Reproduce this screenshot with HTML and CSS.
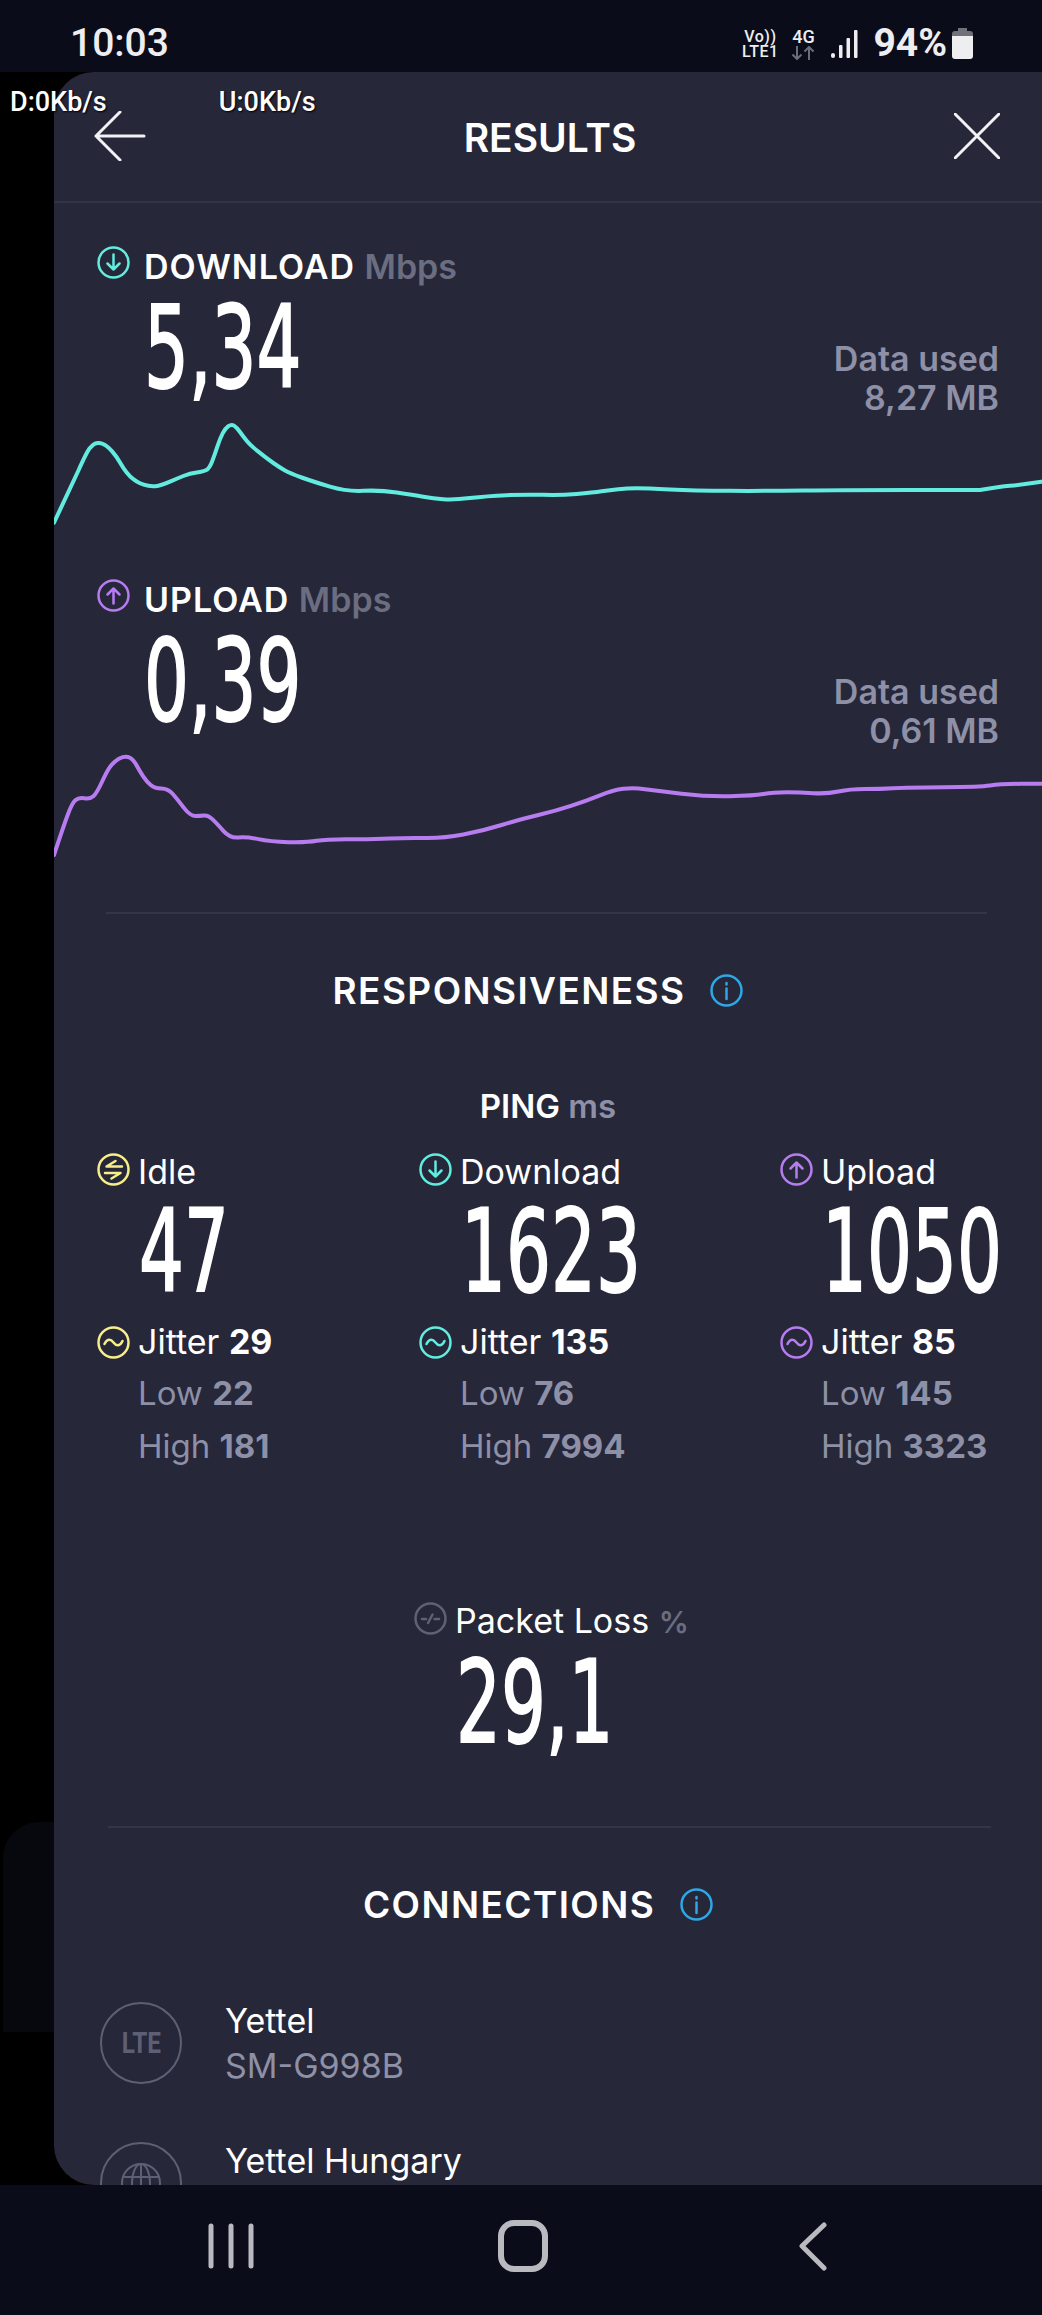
FILE: index.html
```html
<!DOCTYPE html>
<html>
<head>
  <meta charset="UTF-8">
  <title>Results</title>
  <link rel="stylesheet" href="styles.css">
</head>
<body>
  <!-- shared icons -->
  <svg class="icon-defs" width="0" height="0">
    <symbol id="i-down" viewBox="0 0 33 33"><circle cx="16.5" cy="16.5" r="15"/><path d="M16.5 8.5V23.5M10.5 17.5L16.5 23.5L22.5 17.5"/></symbol>
    <symbol id="i-up" viewBox="0 0 33 33"><circle cx="16.5" cy="16.5" r="15"/><path d="M16.5 24.5V9.5M10.5 15.5L16.5 9.5L22.5 15.5"/></symbol>
    <symbol id="i-idle" viewBox="0 0 33 33"><circle cx="16.5" cy="16.5" r="15"/><path d="M25 13.5H9.5L18.5 8M8 20H23.5L14.5 25.5"/></symbol>
    <symbol id="i-jitter" viewBox="0 0 33 33"><circle cx="16.5" cy="16.5" r="15"/><path d="M7.5 18C10 12.5 13.5 12.5 16.5 16.5S23 20.5 25.5 15"/></symbol>
    <symbol id="i-info" viewBox="0 0 33 33"><circle cx="16.5" cy="16.5" r="15"/><path d="M16.5 14.5V25M16.5 9V10.5"/></symbol>
    <symbol id="i-loss" viewBox="0 0 33 33"><circle cx="16.5" cy="16.5" r="15"/><path d="M8 17H12M14 21L18.5 12.5M20.5 17H25"/></symbol>
  </svg>

  <div class="status-bar">
    <span class="clock">10:03</span>
    <div class="status-icons">
      <div class="volte"><span>Vo))</span><span>LTE1</span></div>
      <div class="net">
        <span>4G</span>
        <svg width="24" height="14" viewBox="0 0 24 14"><path d="M6 0V13M1.5 8.5L6 13L10.500 8.500M18 14V1M13.500 5.500L18 1L22.500 5.500"/></svg>
      </div>
      <svg class="signal" width="27" height="29" viewBox="0 0 27 29"><rect x="0" y="23" width="4" height="5" rx="2"/><rect x="8" y="15" width="3.500" height="13" rx="1"/><rect x="15.500" y="8" width="3.500" height="20" rx="1"/><rect x="23" y="0" width="3.500" height="28" rx="1"/></svg>
      <span class="battery-pct">94%</span>
      <svg class="battery" width="21" height="31" viewBox="0 0 21 31"><path class="battery-cap" d="M6 0H15V3H18A3 3 0 0 1 21 6V8H0V6A3 3 0 0 1 3 3H6Z"/><path d="M0 8H21V28A3 3 0 0 1 18 31H3A3 3 0 0 1 0 28Z"/></svg>
    </div>
  </div>

  <div class="main">
    <div class="backdrop"><div class="backdrop-card"></div></div>

    <div class="panel">
      <div class="top-bar">
        <svg width="52" height="50" viewBox="0 0 52 50"><path d="M50 25H2M26 1L2 25L26 49"/></svg>
        <span class="top-title">RESULTS</span>
        <svg width="46" height="46" viewBox="0 0 46 46"><path d="M1 1L45 45M45 1L1 45"/></svg>
      </div>

      <!-- download -->
      <div class="speed">
        <div class="speed-head">
          <div>
            <div class="metric-title">
              <svg class="icon cyan"><use href="#i-down"/></svg>
              <span class="caps">DOWNLOAD <em>Mbps</em></span>
            </div>
            <div class="big speed-value">5,34</div>
          </div>
          <div class="data-used">Data used<br>8,27 MB</div>
        </div>
        <svg class="chart chart-down" width="988" height="120" viewBox="81 570 1482 360" preserveAspectRatio="none">
          <path vector-effect="non-scaling-stroke" d="M81 908L118 750Q130 697 134 686.500Q138 676 141.500 672Q145 668 149 669Q153 670 157.500 675Q162 680 168.500 695Q175 710 180 727.500Q185 745 190 757.500Q195 770 200 777.500Q205 785 210 790Q215 795 222.500 797.500Q230 800 237.500 797Q245 794 255 785Q265 776 275 768Q285 760 295 757.500Q305 755 309.500 750Q314 745 318 725Q322 705 326 680Q330 655 334 640Q338 625 342.500 618.500Q347 612 351 617Q355 622 360 636Q365 650 370 662.500Q375 675 387.500 695Q400 715 410 729Q420 743 427.500 751.500Q435 760 452.500 772.500Q470 785 495 800Q520 815 545 812.500Q570 810 595 817.500Q620 825 635 830Q650 835 665 837.500Q680 840 705 834Q730 828 760 825.500Q790 823 815 824.500Q840 826 865 822Q890 818 902.500 814Q915 810 927.500 807.500Q940 805 955 805Q970 805 1005 808.500Q1040 812 1095 812.500Q1150 813 1205 811.500Q1260 810 1365 810L1470 810Q1500 800 1515 797.500Q1530 795 1546 790L1562 785"/>
        </svg>
      </div>

      <!-- upload -->
      <div class="speed speed-up">
        <div class="speed-head">
          <div>
            <div class="metric-title">
              <svg class="icon purple"><use href="#i-up"/></svg>
              <span class="caps">UPLOAD <em>Mbps</em></span>
            </div>
            <div class="big speed-value">0,39</div>
          </div>
          <div class="data-used">Data used<br>0,61 MB</div>
        </div>
        <svg class="chart chart-up" width="988" height="117" viewBox="81 609 1482 351" preserveAspectRatio="none">
          <path vector-effect="non-scaling-stroke" d="M81 945Q95 860 101.500 825Q108 790 113 781Q118 772 126.500 775Q135 778 140 769Q145 760 152.500 727.500Q160 695 164 683.500Q168 672 173 663.500Q178 655 184 651.500Q190 648 195 653Q200 658 205 676.500Q210 695 215 710Q220 725 226 735Q232 745 242 745.500Q252 746 258.500 760.500Q265 775 275 801.500Q285 828 292.500 828Q300 828 306 826.500Q312 825 318.500 837.500Q325 850 335 872.500Q345 895 357.500 892.500Q370 890 387.500 897.500Q405 905 432.500 906.500Q460 908 475 902.500Q490 897 525 897.500Q560 898 585 895.500Q610 893 637.500 894Q665 895 695 883.500Q725 872 752.500 855Q780 838 807.500 825Q835 812 857.500 797Q880 782 900 766Q920 750 935 746.500Q950 743 967.500 747.500Q985 752 1022.500 761Q1060 770 1095 768.500Q1130 767 1145 762Q1160 757 1180 757Q1200 757 1220 759.500Q1240 762 1257.500 754.500Q1275 747 1297.500 747Q1320 747 1340 744.500Q1360 742 1415 741.500Q1470 741 1485 736.500Q1500 732 1531 731.500L1562 731"/>
        </svg>
      </div>

      <div class="divider divider-first"></div>

      <div class="section-title">
        <span>RESPONSIVENESS</span>
        <svg class="icon blue"><use href="#i-info"/></svg>
      </div>

      <div class="ping-title">PING <em>ms</em></div>

      <div class="ping-grid">
        <div class="ping-col">
          <div class="metric-title">
            <svg class="icon yellow"><use href="#i-idle"/></svg>
            <span class="plain">Idle</span>
          </div>
          <div class="big ping-value">47</div>
          <div class="metric-title jitter">
            <svg class="icon yellow"><use href="#i-jitter"/></svg>
            <span class="plain">Jitter <b>29</b></span>
          </div>
          <div class="low-high">Low <b>22</b></div>
          <div class="low-high">High <b>181</b></div>
        </div>
        <div class="ping-col">
          <div class="metric-title">
            <svg class="icon cyan"><use href="#i-down"/></svg>
            <span class="plain">Download</span>
          </div>
          <div class="big ping-value">1623</div>
          <div class="metric-title jitter">
            <svg class="icon cyan"><use href="#i-jitter"/></svg>
            <span class="plain">Jitter <b>135</b></span>
          </div>
          <div class="low-high">Low <b>76</b></div>
          <div class="low-high">High <b>7994</b></div>
        </div>
        <div class="ping-col">
          <div class="metric-title">
            <svg class="icon purple"><use href="#i-up"/></svg>
            <span class="plain">Upload</span>
          </div>
          <div class="big ping-value">1050</div>
          <div class="metric-title jitter">
            <svg class="icon purple"><use href="#i-jitter"/></svg>
            <span class="plain">Jitter <b>85</b></span>
          </div>
          <div class="low-high">Low <b>145</b></div>
          <div class="low-high">High <b>3323</b></div>
        </div>
      </div>

      <div class="packet">
        <div class="metric-title">
          <svg class="icon grey"><use href="#i-loss"/></svg>
          <span class="plain">Packet Loss <em>%</em></span>
        </div>
        <div class="big ping-value">29,1</div>
      </div>

      <div class="divider divider-second"></div>

      <div class="section-title">
        <span>CONNECTIONS</span>
        <svg class="icon blue"><use href="#i-info"/></svg>
      </div>

      <div class="conn-row conn-first">
        <div class="conn-icon"><span class="conn-lte">LTE</span></div>
        <div class="conn-text">
          <div>Yettel</div>
          <div class="conn-sub">SM-G998B</div>
        </div>
      </div>
      <div class="conn-row conn-second">
        <div class="conn-icon">
          <svg width="42" height="42" viewBox="0 0 42 42"><circle cx="21" cy="21" r="19"/><ellipse cx="21" cy="21" rx="9" ry="19"/><path d="M21 2V40M2 15H40"/></svg>
        </div>
        <div class="conn-text">
          <div>Yettel Hungary</div>
        </div>
      </div>
    </div>
  </div>

  <div class="nav-bar">
    <svg class="nav-recent" width="46" height="46" viewBox="0 0 46 46"><path d="M3 3V43M23 3V43M43 3V43"/></svg>
    <svg class="nav-home" width="54" height="54" viewBox="0 0 54 54"><rect x="5" y="4" width="44" height="46" rx="13"/></svg>
    <svg class="nav-back" width="30" height="50" viewBox="0 0 30 50"><path d="M26 4L4 25L26 47"/></svg>
  </div>

  <div class="speed-overlay">
    <span>D:0Kb/s</span>
    <span>U:0Kb/s</span>
  </div>
</body>
</html>
```

FILE: styles.css
```css
* {
  box-sizing: border-box;
}

body {
  width: 1042px;
  height: 2315px;
  margin: 0;
  position: relative;
  overflow: hidden;
  background: #000;
  color: #fff;
  font-family: Inter, "Noto Sans", sans-serif;
}

em {
  font-style: normal;
}

.icon-defs {
  position: absolute;
}

/* status bar */
.status-bar {
  height: 72px;
  display: flex;
  justify-content: space-between;
  padding: 0 69px 0 70px;
  background: #0a0c1a;
  color: #eeeef0;
  font-family: Roboto, sans-serif;
}

.clock {
  font-size: 39px;
  font-weight: 500;
  line-height: 44px;
  margin-top: 21px;
}

.status-icons {
  display: flex;
  align-items: flex-start;
}

.volte {
  display: flex;
  flex-direction: column;
  align-items: center;
  width: 38px;
  margin-top: 29px;
  font-size: 16px;
  font-weight: 500;
  letter-spacing: 0.5px;
  line-height: 15px;
}

.net {
  display: flex;
  flex-direction: column;
  align-items: center;
  width: 26px;
  margin: 27px 0 0 11px;
  font-size: 18px;
  font-weight: 500;
  line-height: 19px;
}

.net svg {
  fill: none;
  stroke: #6b6d78;
  stroke-width: 2;
}

.signal {
  margin: 30px 0 0 15px;
  fill: #eeeef0;
}

.battery-pct {
  margin-left: 15px;
  font-size: 39px;
  font-weight: 700;
  line-height: 44px;
  margin-top: 21px;
}

.battery {
  margin: 28px 0 0 5px;
  fill: #eeeef0;
}

.battery-cap {
  fill: #6f7078;
}

/* main area */
.main {
  height: 2113px;
  display: flex;
}

.backdrop {
  width: 54px;
  flex-shrink: 0;
}

.backdrop-card {
  height: 210px;
  margin: 1750px 0 0 3px;
  background: #07080d;
  border-radius: 36px 0 0 0;
}

.panel {
  flex: 1;
  overflow: hidden;
  background: #262739;
  border-radius: 40px 0 0 40px;
}

.top-bar {
  height: 131px;
  display: flex;
  align-items: center;
  justify-content: space-between;
  padding: 0 42px 2px 40px;
  border-bottom: 2px solid #313347;
}

.top-bar svg {
  fill: none;
  stroke: #f2f2f4;
  stroke-width: 3;
  stroke-linecap: round;
  stroke-linejoin: round;
}

.top-title {
  font-size: 39px;
  font-weight: 600;
  line-height: 44px;
  margin-top: 4px;
}

/* download and upload */
.speed {
  padding-top: 43px;
}

.speed-up {
  padding-top: 49px;
}

.speed-head {
  height: 164px;
  display: flex;
  justify-content: space-between;
  padding: 0 43px 0 43px;
}

.metric-title {
  display: flex;
  align-items: flex-start;
  gap: 8px;
}

.metric-title span {
  margin-top: 2px;
  line-height: 34px;
}

.metric-title .caps {
  font-size: 34px;
  font-weight: 600;
  letter-spacing: 1px;
  margin: 4px 0 0 6px;
}

.caps em {
  color: #6b6d80;
  letter-spacing: 0;
}

.plain {
  font-size: 34px;
  font-weight: 400;
}

.plain b {
  font-weight: 700;
}

.plain em {
  color: #6b6d80;
  font-size: 30px;
  font-weight: 600;
}

.icon {
  width: 33px;
  height: 33px;
  flex-shrink: 0;
  fill: none;
  stroke-width: 2.500;
  stroke-linecap: round;
  stroke-linejoin: round;
}

.cyan { stroke: #62ecdf; }
.purple { stroke: #b77cf0; }
.yellow { stroke: #f7ee8a; }
.blue { stroke: #2fa6e6; }
.grey { stroke: #5f6175; }

/* condensed DIN look for the large digits */
.big {
  font-family: "DejaVu Sans", sans-serif;
  font-size: 114px;
  line-height: 87px;
  white-space: nowrap;
  transform: scaleX(0.62);
  transform-origin: left;
  -webkit-text-stroke: 2px #fff;
}

.speed-value {
  margin: 20px 0 0 47px;
}

.ping-value {
  margin: 19px 0 0 42px;
}

.data-used {
  margin-top: 93px;
  font-size: 34px;
  font-weight: 600;
  line-height: 39px;
  text-align: right;
  color: #8d90a6;
}

.chart {
  display: block;
  fill: none;
  stroke-width: 4;
  stroke-linecap: round;
  stroke-linejoin: round;
}

.chart-down { stroke: #62ecdf; }
.chart-up { stroke: #b77cf0; }

.divider {
  height: 2px;
  background: #33354a;
}

.divider-first {
  margin: 52px 55px 0 52px;
}

.divider-second {
  margin: 80px 51px 0 54px;
}

.section-title {
  display: flex;
  justify-content: center;
  align-items: center;
  gap: 25px;
  height: 34px;
  margin-top: 59px;
  padding-right: 20px;
  font-size: 37px;
  font-weight: 600;
  letter-spacing: 1.4px;
}

.ping-title {
  margin-top: 82px;
  font-size: 33px;
  font-weight: 600;
  line-height: 34px;
  text-align: center;
}

.ping-title em {
  color: #8d90a6;
}

.ping-grid {
  display: grid;
  grid-template-columns: 322px 361px 1fr;
  margin-top: 30px;
  padding-left: 43px;
}

.jitter {
  margin-top: 31px;
}

.metric-title.jitter span {
  margin-top: -1px;
}

.low-high {
  margin-left: 41px;
  font-size: 33px;
  line-height: 53px;
  color: #8d90a6;
}

.low-high b {
  font-weight: 700;
}

.jitter + .low-high {
  margin-top: 8px;
}

.packet {
  margin-top: 129px;
  padding-left: 360px;
}

.packet .ping-value {
  margin-top: 20px;
}

/* connections */
.conn-row {
  display: flex;
  align-items: flex-start;
  gap: 43px;
  padding-left: 46px;
}

.conn-first {
  margin-top: 81px;
}

.conn-second {
  margin-top: 54px;
}

.conn-icon {
  width: 82px;
  height: 82px;
  flex-shrink: 0;
  display: flex;
  align-items: center;
  justify-content: center;
  border: 2px solid #5d6075;
  border-radius: 50%;
}

.conn-icon svg {
  fill: none;
  stroke: #5d6075;
  stroke-width: 2;
}

.conn-lte {
  font-family: Roboto, sans-serif;
  font-size: 29px;
  font-weight: 700;
  color: #5d6075;
  transform: scaleX(0.84);
}

.conn-text {
  height: 90px;
  margin-top: -4px;
  font-size: 34px;
  line-height: 45px;
}

.conn-sub {
  color: #8d90a6;
}

/* navigation bar */
.nav-bar {
  height: 130px;
  display: flex;
  align-items: center;
  padding: 0 0 8px 208px;
  background: #0a0c1a;
}

.nav-bar svg {
  fill: none;
  stroke: #b8babf;
  stroke-linecap: round;
  stroke-linejoin: round;
}

.nav-recent {
  stroke-width: 5;
}

.nav-home {
  margin-left: 242px;
  stroke-width: 6;
}

.nav-back {
  margin-left: 248px;
  stroke-width: 5;
}

/* network meter floating over the app */
.speed-overlay {
  position: absolute;
  top: 87px;
  left: 10px;
  display: flex;
  gap: 112px;
  font-family: Roboto, sans-serif;
  font-size: 27px;
  font-weight: 500;
  line-height: 30px;
  text-shadow: 1px 1px 2px #000;
}
```
